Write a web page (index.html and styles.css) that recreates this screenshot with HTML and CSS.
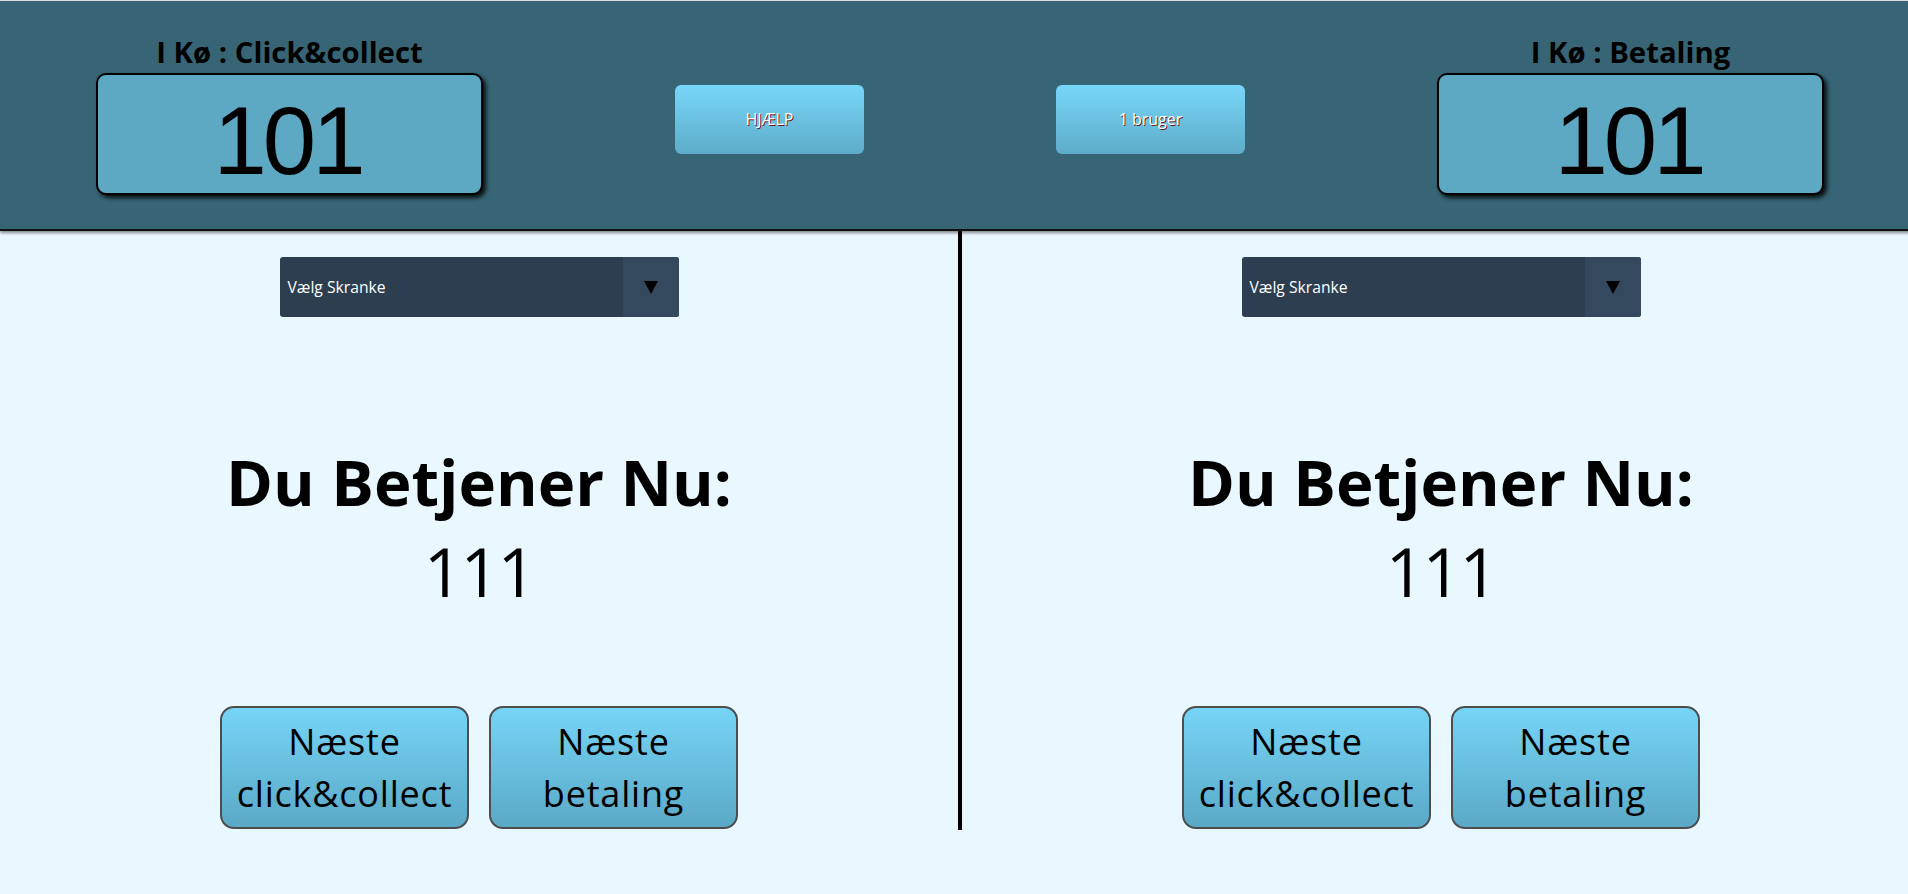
FILE: index.html
```html
<!DOCTYPE html>
<html lang="da">
<head>
<meta charset="utf-8">
<title>Kø</title>
<link rel="stylesheet" href="styles.css">
</head>
<body>
<div class="page">
  <header class="topbar">
    <div class="queue">
      <div class="queue-title">I Kø : Click&amp;collect</div>
      <div class="queue-box">101</div>
    </div>
    <button class="top-btn">HJÆLP</button>
    <button class="top-btn">1 bruger</button>
    <div class="queue">
      <div class="queue-title">I Kø : Betaling</div>
      <div class="queue-box">101</div>
    </div>
  </header>
  <main class="desks">
    <section class="desk">
      <div class="select">
        <span class="select-label">Vælg Skranke</span>
        <span class="select-arrow"><svg width="14" height="13" viewBox="0 0 14 13"><polygon points="0,0 14,0 7,13" fill="#000"/></svg></span>
      </div>
      <h1 class="serving-title">Du Betjener Nu:</h1>
      <div class="serving-number">111</div>
      <div class="actions">
        <button class="next-btn">Næste<br>click&amp;collect</button>
        <button class="next-btn">Næste<br>betaling</button>
      </div>
    </section>
    <div class="divider"></div>
    <section class="desk">
      <div class="select">
        <span class="select-label">Vælg Skranke</span>
        <span class="select-arrow"><svg width="14" height="13" viewBox="0 0 14 13"><polygon points="0,0 14,0 7,13" fill="#000"/></svg></span>
      </div>
      <h1 class="serving-title">Du Betjener Nu:</h1>
      <div class="serving-number">111</div>
      <div class="actions">
        <button class="next-btn">Næste<br>click&amp;collect</button>
        <button class="next-btn">Næste<br>betaling</button>
      </div>
    </section>
  </main>
</div>
</body>
</html>
```
FILE: styles.css
```css
html, body {
  margin: 0;
  padding: 0;
  overflow: hidden;
  background: #e9f7fe;
  font-family: "Open Sans", "Noto Sans", sans-serif;
  color: #000;
}

.page {
  width: 1920px;
}

.topbar {
  box-sizing: border-box;
  height: 231px;
  border-top: 1px solid #d6dde0;
  border-bottom: 2px solid #111;
  background: #376575;
  box-shadow: 0 2px 3px rgba(0, 0, 0, 0.45);
  display: flex;
  justify-content: space-around;
  align-items: center;
  position: relative;
  z-index: 1;
}

.queue {
  width: 387px;
  display: flex;
  flex-direction: column;
  align-items: center;
  gap: 4px;
}

.queue-title {
  font-weight: 700;
  font-size: 29.3px;
  line-height: 34px;
  color: #000;
}

.queue-box {
  box-sizing: border-box;
  width: 387px;
  height: 122px;
  border: 2px solid #000;
  border-radius: 10px;
  background: #5da8c3;
  box-shadow: 3px 3px 4px rgba(0, 0, 0, 0.85);
  font-family: "Liberation Sans", Arial, sans-serif;
  font-size: 96px;
  line-height: 96px;
  letter-spacing: -4px;
  padding-top: 18px;
  padding-right: 4px;
  text-align: center;
}

.top-btn {
  width: 189px;
  height: 69px;
  margin-top: 8px;
  border: none;
  border-radius: 6px;
  background: linear-gradient(to bottom, #78d6f8, #5eacc9);
  color: #fff;
  font-family: "Open Sans", sans-serif;
  font-size: 16px;
  text-shadow: 1px 1px 0 rgba(110, 0, 0, 0.9);
  padding: 0;
}

.desks {
  display: flex;
  align-items: stretch;
}

.desk {
  flex: 1;
  display: flex;
  flex-direction: column;
  align-items: center;
  padding: 26px 0 1px;
}

.divider {
  width: 4px;
  background: #000;
}

.select {
  box-sizing: border-box;
  width: 399px;
  height: 60px;
  border-radius: 3px;
  background: #2c3e50;
  display: flex;
  align-items: stretch;
  overflow: hidden;
}

.select-label {
  flex: 1;
  display: flex;
  align-items: center;
  padding-left: 8px;
  color: #fff;
  font-size: 15.7px;
}

.select-arrow {
  width: 56px;
  background: #34495e;
  display: flex;
  align-items: center;
  justify-content: center;
}

.serving-title {
  margin: 128px 0 0;
  font-size: 63.5px;
  line-height: 74px;
  font-weight: 700;
}

.serving-number {
  margin-top: 11px;
  font-size: 68px;
  line-height: 82px;
  letter-spacing: -2px;
}

.actions {
  margin-top: 94px;
  display: flex;
  gap: 20px;
}

.next-btn {
  box-sizing: border-box;
  width: 249px;
  height: 123px;
  border: 2px solid #4d4d4d;
  border-radius: 14px;
  background: linear-gradient(to bottom, #76d4f6, #5aa9c6);
  font-family: "Open Sans", sans-serif;
  font-size: 36px;
  line-height: 52px;
  letter-spacing: 0.8px;
  color: #000;
  padding: 0;
}
```
